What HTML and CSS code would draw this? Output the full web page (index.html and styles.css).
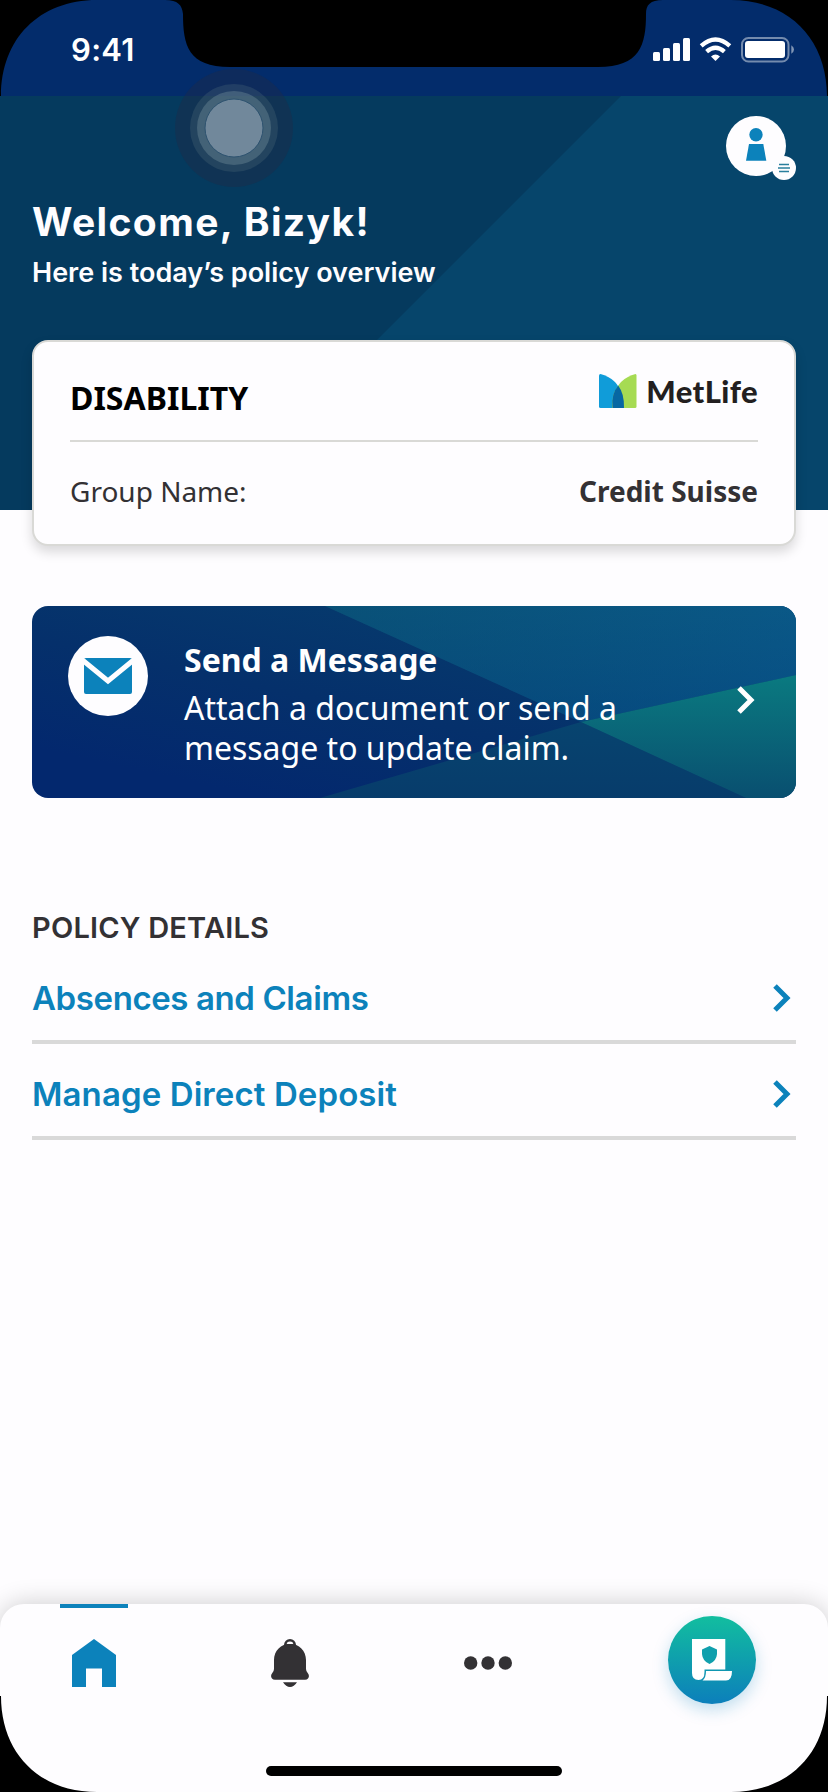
FILE: index.html
```html
<!DOCTYPE html>
<html lang="en">
<head>
<meta charset="utf-8">
<title>Policy overview</title>
<link rel="stylesheet" href="styles.css">
</head>
<body>
<div class="phone">
  <div class="status-bar">
    <span class="time">9:41</span>
    <svg class="status-icons" width="144" height="28" viewBox="0 0 144 28">
      <g fill="#fff">
        <rect x="0" y="15" width="7" height="9" rx="1.5"/>
        <rect x="10" y="11" width="7" height="13" rx="1.5"/>
        <rect x="20" y="6" width="7" height="18" rx="1.5"/>
        <rect x="30" y="1" width="7" height="23" rx="1.5"/>
        <path d="M62.5 24 L58 19.4 Q62.5 15.8 67 19.4Z"/>
        <rect x="92" y="4" width="40" height="17" rx="3"/>
        <path d="M138.300 8.300 Q141 10 141 12.500 T138.300 16.700Z" opacity=".5"/>
      </g>
      <g fill="none" stroke="#fff" stroke-width="4.300">
        <path d="M48.200 8.900 Q62.500 -3.900 76.800 8.900"/>
        <path d="M53.600 14.700 Q62.500 6.900 71.400 14.700"/>
        <rect x="89" y="1" width="46.500" height="23.500" rx="6.500" stroke-width="2" opacity=".45"/>
      </g>
    </svg>
  </div>
  <header class="hero">
    <svg class="hero-art" width="828" height="414" viewBox="0 0 828 414"><path d="M621 0H828V414H207Z" fill="#06456b"/></svg>
    <button class="profile" aria-label="Profile menu">
      <svg width="72" height="66" viewBox="0 0 72 66">
        <circle cx="30" cy="30" r="30" fill="#fefdff"/>
        <circle cx="30" cy="18.700" r="6.700" fill="#0c82bb"/>
        <path d="M23 28H37.300L40.300 44.700H20Z" fill="#0c82bb"/>
        <circle cx="58" cy="52" r="12" fill="#fefdff"/>
        <path d="M53 48.500H63M52 52H64M53 55.500H63" stroke="#2a7f9d" stroke-width="1.500"/>
      </svg>
    </button>
    <h1 class="welcome">Welcome, Bizyk!</h1>
    <p class="subtitle">Here is today’s policy overview</p>
  </header>
  <main class="content">
    <section class="card">
      <div class="card-head">
        <h2 class="card-title">DISABILITY</h2>
        <div class="brand">
          <svg width="38" height="34" viewBox="0 0 38 34">
            <path d="M1.500 0Q18 4 24 22L25 34H1.500Q0 34 0 32.500V1.500Q0 0 1.500 0Z" fill="#109cd9"/>
            <path d="M36.500 0Q20 4 14 22L13 34H36Q37.500 34 37.500 32.500V1.500Q37.500 0 36.500 0Z" fill="#a6db53"/>
            <path d="M19.200 11.500Q25.500 20 25 34H13.500Q12 20 19.200 11.500Z" fill="#0767a3"/>
          </svg>
          <span class="brand-name">MetLife</span>
        </div>
      </div>
      <div class="card-row"><span class="label">Group Name:</span><strong class="value">Credit Suisse</strong></div>
    </section>
    <a class="message">
      <svg class="message-art" width="764" height="192" viewBox="0 0 764 192">
        <defs>
          <linearGradient id="base" gradientUnits="userSpaceOnUse" x1="270" y1="-20" x2="225" y2="190"><stop offset="0" stop-color="#063a6d"/><stop offset=".5" stop-color="#05306b"/><stop offset="1" stop-color="#03286e"/></linearGradient>
          <linearGradient id="upper" x1="0" y1="0" x2="1" y2="0"><stop offset="0" stop-color="#084b73"/><stop offset="1" stop-color="#09568a"/></linearGradient>
          <linearGradient id="right" x1="0" y1="0" x2="0" y2="1"><stop offset="0" stop-color="#0a7a80"/><stop offset="1" stop-color="#094f70"/></linearGradient>
          <linearGradient id="lower" x1="0" y1="0" x2="0" y2="1"><stop offset="0" stop-color="#07446f"/><stop offset="1" stop-color="#073c6b"/></linearGradient>
          <linearGradient id="shade" x1="0" y1="0" x2="0" y2="1"><stop offset="0" stop-color="#0c5c80" stop-opacity=".35"/><stop offset="1" stop-color="#03407c" stop-opacity=".45"/></linearGradient>
        </defs>
        <rect width="764" height="192" fill="url(#base)"/>
        <path d="M293 0H764V69L549 116Z" fill="url(#upper)"/>
        <path d="M293 0H764V69L549 116Z" fill="url(#shade)"/>
        <path d="M549 116L714 192H288Z" fill="url(#lower)"/>
        <path d="M549 116L764 69V192H714Z" fill="url(#right)"/>
      </svg>
      <svg class="mail" width="80" height="80" viewBox="0 0 80 80">
        <circle cx="40" cy="40" r="40" fill="#fefdff"/>
        <rect x="16" y="22" width="48" height="36" rx="2" fill="#0c82bb"/>
        <path d="M15 24.500L40 45L65 24.500" fill="none" stroke="#fefdff" stroke-width="5"/>
      </svg>
      <div class="message-text">
        <h3 class="message-title">Send a Message</h3>
        <p class="message-body">Attach a document or send a<br>message to update claim.</p>
      </div>
      <svg class="message-arrow" width="20" height="30" viewBox="0 0 20 30"><path d="M3 3L15 15L3 27" fill="none" stroke="#fff" stroke-width="5"/></svg>
    </a>
    <section class="details">
      <h2 class="details-title">POLICY DETAILS</h2>
      <a class="row row-claims"><span>Absences and Claims</span><svg width="20" height="30" viewBox="0 0 20 30"><path d="M3 3L15 15L3 27" fill="none" stroke="#0c82bb" stroke-width="5"/></svg></a>
      <a class="row row-deposit"><span>Manage Direct Deposit</span><svg width="20" height="30" viewBox="0 0 20 30"><path d="M3 3L15 15L3 27" fill="none" stroke="#0c82bb" stroke-width="5"/></svg></a>
    </section>
  </main>
  <nav class="tabs">
    <a class="tab tab-home"><svg width="44" height="48" viewBox="0 0 44 48"><path d="M0 16L22 0L44 16V48H30V29.500H14V48H0Z" fill="#0c82bb"/></svg></a>
    <a class="tab tab-alerts"><svg width="38" height="48" viewBox="0 0 38 48"><circle cx="19" cy="6" r="4.700" fill="none" stroke="#333134" stroke-width="2.600"/><path d="M19 4.800C10 4.800 3 12 3 21V30Q3 32 1.300 34Q-1 37 1 39.500Q2 40.700 4 40.700H34Q36 40.700 37 39.500Q39 37 36.700 34Q35 32 35 30V21C35 12 28 4.800 19 4.800ZM12 43.300H26Q23 48 19 48Q15 48 12 43.300Z" fill="#333134"/><path d="M15.800 5Q19 2 22.200 5Z" fill="#fefdff"/></svg></a>
    <a class="tab tab-more"><svg width="48" height="14" viewBox="0 0 48 14" fill="#333134"><circle cx="6.700" cy="7" r="6.700"/><circle cx="24" cy="7" r="6.700"/><circle cx="41.300" cy="7" r="6.700"/></svg></a>
    <a class="policy-button"><svg width="40" height="42" viewBox="0 0 40 42"><path d="M0 0H33.300V30.500H12.500V33Q12.500 41 6.500 41Q0 41 0 34Z" fill="#fff"/><path d="M14 32H40Q40 41.500 34 41.500H10.500Q14 39 14 32Z" fill="#fff"/><path d="M17.500 7L25 10.500V15Q24.500 22 17.500 25Q10.500 22 10 15V10.500Z" fill="#10a0ad"/></svg></a>
    <div class="home-indicator"></div>
  </nav>
  <div class="touch"><svg width="120" height="120" viewBox="0 0 120 120">
    <circle cx="60" cy="60" r="59" fill="#202b46" fill-opacity=".4"/>
    <circle cx="60" cy="60" r="44" fill="#5b7880" fill-opacity=".25"/>
    <circle cx="60" cy="60" r="37" fill="#7b949f" fill-opacity=".37"/>
    <circle cx="60" cy="60" r="29" fill="#71889b" stroke="#2d526f"/>
  </svg></div>
  <svg class="bezel" width="828" height="1792" viewBox="0 0 828 1792">
    <path d="M0 0H97C39 0 1 39 1 96H0Z"/>
    <path d="M828 0H731C789 0 827 39 827 96H828Z"/>
    <path d="M165 0H663C650 0 646 5 646 14C646 45 640 67 598 67H230C188 67 183 45 183 14C182 5 178 0 165 0Z"/>
    <path d="M0 1792H97C39 1792 1 1753 1 1696H0Z"/>
    <path d="M828 1792H731C789 1792 827 1753 827 1696H828Z"/>
  </svg>
</div>
</body>
</html>
```
FILE: styles.css
```css
* { box-sizing: border-box; }
body, h1, h2, h3, p { margin: 0; }
body { background: #fefdff; }
svg { display: block; flex: none; }

.phone {
  position: relative;
  display: flex;
  flex-direction: column;
  width: 828px;
  height: 1792px;
  overflow: hidden;
  background: #fefdff;
  font-family: "Noto Sans", sans-serif;
  color: #333134;
}

.status-bar {
  display: flex;
  justify-content: space-between;
  align-items: flex-start;
  height: 96px;
  padding: 33px 31px 0 71px;
  background: #032c6b;
}
.time {
  font: 600 31px/34px Inter, sans-serif;
  letter-spacing: .3px;
  color: #fff;
}
.status-icons { margin-top: 4px; }

.hero {
  position: relative;
  height: 414px;
  flex: none;
  padding: 20px 32px 0;
  background: #053a5e;
  color: #fefdff;
  font-family: Inter, sans-serif;
}
.hero-art { position: absolute; inset: 0; }
.profile {
  position: relative;
  display: block;
  margin: 0 -2px 0 auto;
  padding: 0;
  border: 0;
  background: none;
}
.welcome {
  position: relative;
  margin-top: 16px;
  font-size: 39px;
  line-height: 48px;
  font-weight: 700;
  letter-spacing: 1.4px;
}
.subtitle {
  position: relative;
  margin-top: 11px;
  font-size: 27px;
  line-height: 32px;
  font-weight: 600;
}

.content { flex: 1; padding: 0 32px; }
.card {
  position: relative;
  height: 206px;
  margin-top: -170px;
  padding: 0 36px;
  border: 2px solid #d9d9d6;
  border-radius: 16px;
  background: #fefdff;
  box-shadow: 0 6px 12px rgba(0, 0, 0, .15);
}
.card-head {
  display: flex;
  justify-content: space-between;
  align-items: flex-start;
  height: 100px;
  padding-top: 32px;
  border-bottom: 2px solid #d9d9d6;
}
.card-title {
  margin-top: 2px;
  font-size: 32px;
  line-height: 44px;
  font-weight: 700;
  color: #000;
}
.brand { display: flex; gap: 9px; }
.brand-name {
  font: 900 31px/34px Lato, sans-serif;
  letter-spacing: .4px;
  color: #231f20;
}
.card-row {
  display: flex;
  justify-content: space-between;
  align-items: center;
  height: 98px;
  font-size: 28px;
}

.message {
  position: relative;
  display: flex;
  align-items: flex-start;
  height: 192px;
  margin-top: 60px;
  padding: 30px 40px 0 36px;
  border-radius: 16px;
  overflow: hidden;
  color: #fff;
}
.message-art { position: absolute; inset: 0; }
.mail, .message-text, .message-arrow { position: relative; }
.message-text { flex: 1; padding-left: 36px; }
.message-title { font-size: 32px; line-height: 48px; }
.message-body { margin-top: 4px; font-size: 32px; line-height: 40px; }
.message-arrow { margin-top: 49px; }

.details { margin-top: 109px; font-family: Inter, sans-serif; }
.details-title {
  font-size: 29px;
  line-height: 41px;
  font-weight: 600;
  letter-spacing: .2px;
}
.row {
  display: flex;
  justify-content: space-between;
  align-items: center;
  height: 96px;
  padding: 8px 4px 0 0;
  border-bottom: 4px solid #d9d9d9;
  color: #0c82bb;
  font-size: 33px;
  font-weight: 600;
}
.row-claims { letter-spacing: -.4px; }
.row-deposit { letter-spacing: .1px; }

.tabs {
  position: relative;
  height: 188px;
  display: grid;
  grid-template-columns: 188px 204px 192px 244px;
  align-items: start;
  align-content: start;
  border-radius: 24px 24px 0 0;
  background: #fefdff;
  box-shadow: 0 0 26px rgba(0, 0, 0, .2);
}
.tab {
  display: flex;
  justify-content: center;
  height: 84px;
  padding-top: 35px;
}
.tab-home { width: 68px; margin-left: 60px; padding-top: 31px; border-top: 4px solid #0c82bb; }
.tab-more { padding-top: 52px; }
.policy-button {
  display: flex;
  width: 88px;
  height: 88px;
  margin: 12px 0 0 84px;
  padding: 23px 0 0 24px;
  border-radius: 50%;
  background: linear-gradient(#12be9f, #0c7fbb);
  box-shadow: 0 6px 16px rgba(12, 130, 187, .25);
}
.home-indicator {
  grid-column: 1 / -1;
  justify-self: center;
  width: 296px;
  height: 10px;
  margin-top: 62px;
  border-radius: 5px;
  background: #000;
}

.touch { position: absolute; left: 174px; top: 68px; }
.bezel { position: absolute; inset: 0; pointer-events: none; }
```
